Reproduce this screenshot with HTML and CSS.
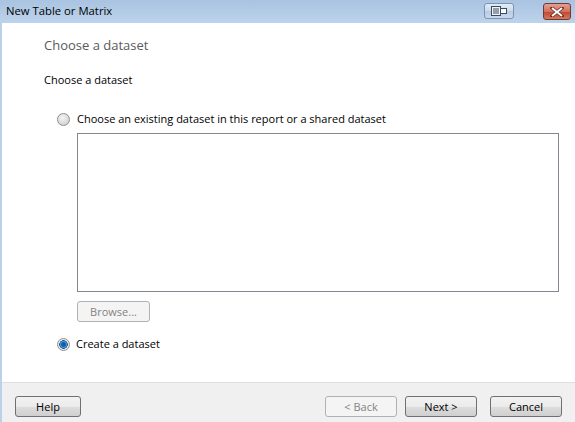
FILE: index.html
```html
<!DOCTYPE html>
<html>
<head>
<meta charset="utf-8">
<link rel="stylesheet" href="styles.css">
</head>
<body>
<div class="window">
  <div class="titlebar">
    <span class="title">New Table or Matrix</span>
    <div class="caption-btns">
      <div class="cbtn restore">
        <svg width="16" height="10" viewBox="0 0 16 10"><rect x="0.5" y="0.5" width="9" height="9" fill="#eef3fa" stroke="#3b4a5e"/><line x1="3" y1="2" x2="3" y2="8" stroke="#3b4a5e"/><line x1="5" y1="2" x2="5" y2="8" stroke="#3b4a5e"/><line x1="7" y1="2" x2="7" y2="8" stroke="#3b4a5e"/><rect x="9.5" y="2.5" width="6" height="5" fill="#fff" stroke="#3b4a5e"/></svg>
      </div>
      <div class="cbtn close">
        <svg width="14" height="10" viewBox="0 0 14 10"><path d="M2 1 L12 9 M12 1 L2 9" stroke="#6b2a22" stroke-width="3.4" stroke-linecap="square"/><path d="M2 1 L12 9 M12 1 L2 9" stroke="#fff" stroke-width="2"/></svg>
      </div>
    </div>
  </div>
  <div class="body">
    <div class="content">
      <div class="heading">Choose a dataset</div>
      <div class="label">Choose a dataset</div>
      <div class="option">
        <span class="radio"></span>
        <span>Choose an existing dataset in this report or a shared dataset</span>
      </div>
      <div class="listbox"></div>
      <div class="btn disabled browse">Browse...</div>
      <div class="option option2">
        <span class="radio checked"></span>
        <span>Create a dataset</span>
      </div>
    </div>
    <div class="footer">
      <div class="btn help">Help</div>
      <div class="spacer"></div>
      <div class="btn disabled">&lt; Back</div>
      <div class="btn">Next &gt;</div>
      <div class="btn cancel">Cancel</div>
    </div>
  </div>
</div>
</body>
</html>
```
FILE: styles.css
```css
html, body {
  margin: 0;
  padding: 0;
  width: 575px;
  height: 422px;
  overflow: hidden;
}
body {
  font-family: "Open Sans", "Noto Sans", sans-serif;
  font-size: 11px;
  color: #000;
}
.window {
  width: 575px;
  height: 422px;
  display: flex;
  flex-direction: column;
  background: #b9d1ea;
}
.titlebar {
  height: 23px;
  flex: none;
  display: flex;
  align-items: center;
  justify-content: space-between;
  background: linear-gradient(#a9c3e0, #bcd3ec);
  box-sizing: border-box;
}
.title {
  padding-left: 6px;
  font-size: 11.3px;
  margin-top: -3px;
}
.caption-btns {
  display: flex;
  align-items: flex-start;
  align-self: flex-start;
  padding-top: 3px;
  gap: 29px;
  padding-right: 4px;
}
.cbtn {
  display: flex;
  align-items: center;
  justify-content: center;
  box-sizing: border-box;
  border-radius: 3px;
}
.restore {
  width: 30px;
  height: 16px;
  border: 1px solid #7d93b0;
  background: linear-gradient(#e3ecf6 0%, #cbd9ea 50%, #b7cbe2 51%, #c9d9ec 100%);
}
.close {
  width: 28px;
  height: 17px;
  border: 1px solid #6f3a35;
  background: linear-gradient(#e5a192 0%, #d2705e 50%, #c2442e 51%, #d27a5f 100%);
}
.body {
  flex: 1;
  margin-left: 2px;
  display: flex;
  flex-direction: column;
  background: #fff;
}
.content {
  flex: 1;
  padding-left: 42px;
  padding-right: 16px;
}
.heading {
  margin-top: 13px;
  font-size: 13px;
  color: #5a5a5a;
  height: 18px;
  line-height: 18px;
}
.label {
  margin-top: 17px;
  height: 17px;
  line-height: 17px;
}
.option {
  display: flex;
  align-items: center;
  gap: 7px;
  margin-top: 23px;
  margin-left: 13px;
  height: 16px;
  line-height: 16px;
}
.option2 {
  margin-top: 14px;
  gap: 6px;
}
.radio {
  width: 11px;
  height: 11px;
  border-radius: 50%;
  border: 1px solid #8e8f8f;
  background: radial-gradient(circle at 40% 35%, #f4f4f4, #c9c9c9);
  box-sizing: content-box;
  flex: none;
}
.radio.checked {
  background: radial-gradient(circle, #0f5fb0 0 2px, #4aa0e8 3px, #1e4e80 4px, #e8e8e8 4.5px, #f4f4f4);
}
.listbox {
  margin-left: 33px;
  margin-top: 6px;
  width: 480px;
  height: 157px;
  border: 1px solid #828790;
  background: #fff;
}
.btn {
  width: 72px;
  height: 21px;
  box-sizing: border-box;
  border: 1px solid #707070;
  border-radius: 3px;
  background: linear-gradient(#f2f2f2 0%, #ebebeb 50%, #dddddd 51%, #cfcfcf 100%);
  display: flex;
  align-items: center;
  justify-content: center;
  font-size: 11px;
}
.btn.disabled {
  border-color: #adb2b5;
  background: #f4f4f4;
  color: #838383;
}
.browse {
  margin-left: 33px;
  margin-top: 9px;
  width: 73px;
}
.footer {
  height: 40px;
  flex: none;
  background: #f0f0f0;
  border-top: 1px solid #dfdfdf;
  display: flex;
  align-items: flex-start;
  padding-top: 13px;
  padding-left: 13px;
  padding-right: 13px;
  box-sizing: border-box;
  gap: 8px;
}
.help {
  width: 66px;
}
.spacer {
  flex: 1;
}
.cancel {
  margin-left: 5px;
}
```
